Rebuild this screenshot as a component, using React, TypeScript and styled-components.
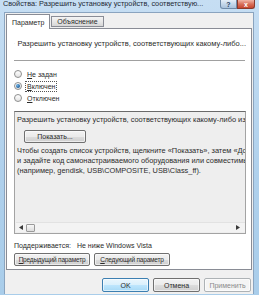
import React from "react";
import styled, { createGlobalStyle } from "styled-components";

const GlobalStyle = createGlobalStyle`
  html, body {
    margin: 0;
    padding: 0;
    background: #ffffff;
  }
  body {
    font-family: "Liberation Sans", Arial, sans-serif;
    color: #2b2b2b;
  }
`;

const Window = styled.div`
  width: 259px;
  height: 295px;
  box-sizing: border-box;
  display: flex;
  flex-direction: column;
  padding: 0 5px 1px 4px;
  background: linear-gradient(180deg, #c6def3 0%, #afd0ec 60%, #a9cdea 100%);
  overflow: hidden;
`;

const TitleBar = styled.div`
  height: 12px;
  display: flex;
  align-items: flex-start;
  margin: 0 -1px 0 -1px;
`;

const Title = styled.div`
  flex: 1;
  font-size: 7.3px;
  line-height: 8px;
  color: #1f2a36;
  white-space: nowrap;
  overflow: hidden;
`;

const CaptionButton = styled.div<{ $close?: boolean }>`
  width: ${(p) => (p.$close ? 18 : 17)}px;
  height: 9px;
  box-sizing: border-box;
  display: flex;
  align-items: center;
  justify-content: center;
  border: 1px solid ${(p) => (p.$close ? "#8a3a2c" : "#6f8aa8")};
  border-top: none;
  border-radius: ${(p) => (p.$close ? "0 0 3px 0" : "0 0 0 3px")};
  background: ${(p) =>
    p.$close
      ? "linear-gradient(180deg, #f0b4a6 0%, #d9705b 50%, #c7452e 100%)"
      : "linear-gradient(180deg, #e4eef8 0%, #c4d7ea 50%, #a9c2dc 100%)"};
  font-size: 7px;
  font-weight: bold;
  color: ${(p) => (p.$close ? "#ffffff" : "#29415e")};
`;

const Client = styled.div`
  flex: 1;
  display: flex;
  flex-direction: column;
  min-height: 0;
  border: 1px solid #8aa4bf;
  border-bottom: none;
  background: #f0f0f0;
  padding: 1px;
`;

const TabRow = styled.div`
  height: 14px;
  display: flex;
  align-items: flex-end;
  gap: 1px;
  position: relative;
  z-index: 1;
`;

const Tab = styled.div<{ $active?: boolean }>`
  box-sizing: border-box;
  height: ${(p) => (p.$active ? 15 : 11)}px;
  padding: 0 5px;
  display: flex;
  align-items: center;
  font-size: 7px;
  border: 1px solid #898c95;
  border-bottom: ${(p) => (p.$active ? "none" : "1px solid #898c95")};
  background: ${(p) =>
    p.$active ? "#ffffff" : "linear-gradient(180deg, #f4f4f4 0%, #e7e7e7 50%, #d6d6d6 100%)"};
  margin-bottom: ${(p) => (p.$active ? "-1px" : "1px")};
`;

const Panel = styled.div`
  flex: 1;
  display: flex;
  flex-direction: column;
  min-height: 0;
  border: 1px solid #898c95;
  background: #ffffff;
  padding: 8px 5px 0 7px;
`;

const HeaderRow = styled.div`
  height: 12px;
  display: flex;
  align-items: center;
  gap: 3px;
  font-size: 7.5px;
  white-space: nowrap;
  overflow: hidden;
`;

const Divider = styled.div`
  height: 1px;
  margin: 11px 1px 0 0;
  background: #a0a0a0;
`;

const RadioGroup = styled.div`
  margin-top: 7px;
  display: flex;
  flex-direction: column;
`;

const RadioRow = styled.div`
  height: 12px;
  display: flex;
  align-items: center;
  gap: 4px;
  font-size: 7px;
`;

const RadioCircle = styled.span<{ $checked?: boolean }>`
  width: 8px;
  height: 8px;
  box-sizing: border-box;
  border-radius: 50%;
  border: 1px solid #8e8f8f;
  background: linear-gradient(180deg, #ffffff 0%, #e3e3e3 100%);
  display: flex;
  align-items: center;
  justify-content: center;

  &::after {
    content: "";
    display: ${(p) => (p.$checked ? "block" : "none")};
    width: 4px;
    height: 4px;
    border-radius: 50%;
    background: radial-gradient(circle at 35% 35%, #6fb3e8 0%, #1f5f99 70%);
  }
`;

const RadioLabel = styled.span<{ $focused?: boolean }>`
  padding: 0 1px;
  outline: ${(p) => (p.$focused ? "1px dotted #555" : "none")};
  line-height: 9px;
`;

const Key = styled.span`
  text-decoration: underline;
`;

const OptionsBox = styled.div`
  margin-top: 7px;
  height: 123px;
  box-sizing: border-box;
  display: flex;
  flex-direction: column;
  border: 1px solid #a3a3a3;
  border-top-color: #6a6a6a;
  background: #eeeeee;
  padding: 3px 0 0 2px;
  overflow: hidden;
  font-size: 7.4px;
`;

const BoxLine = styled.div`
  height: 10px;
  line-height: 10px;
  white-space: nowrap;
`;

const WinButton = styled.div<{ $width: number; $variant?: "default" | "disabled" }>`
  width: ${(p) => p.$width}px;
  height: 13px;
  box-sizing: border-box;
  display: flex;
  align-items: center;
  justify-content: center;
  font-size: 7px;
  white-space: nowrap;
  border-radius: 2px;
  border: 1px solid
    ${(p) => (p.$variant === "default" ? "#3c7fb1" : p.$variant === "disabled" ? "#adb2b5" : "#707070")};
  color: ${(p) => (p.$variant === "disabled" ? "#8a8a8a" : "#2b2b2b")};
  background: ${(p) =>
    p.$variant === "default"
      ? "linear-gradient(180deg, #eaf6fd 0%, #d9f0fc 50%, #bee6fd 51%, #a7d9f5 100%)"
      : p.$variant === "disabled"
      ? "#f4f4f4"
      : "linear-gradient(180deg, #f2f2f2 0%, #ebebeb 50%, #dddddd 51%, #cfcfcf 100%)"};
  box-shadow: inset 0 0 0 1px rgba(255, 255, 255, 0.6);
`;

const NavButton = styled(WinButton)`
  font-size: 6.5px;
  letter-spacing: -0.2px;
`;

const ShowButtonRow = styled.div`
  margin: 5px 0 3px 7px;
`;

const ScrollBar = styled.div`
  margin: auto 0 1px -1px;
  height: 9px;
  display: flex;
  align-items: center;
  padding: 0 5px 0 3px;
  background: #f3f3f3;
  border-top: 1px solid #e2e2e2;
`;

const Thumb = styled.div`
  width: 9px;
  height: 8px;
  box-sizing: border-box;
  margin-left: 3px;
  border: 1px solid #9a9a9a;
  border-radius: 1px;
  background: linear-gradient(180deg, #f7f7f7 0%, #dcdcdc 100%);
`;

const Spacer = styled.div`
  flex: 1;
`;

const SupportRow = styled.div`
  margin-top: 6px;
  height: 10px;
  display: flex;
  align-items: center;
  gap: 6px;
  font-size: 7px;
  white-space: nowrap;
`;

const NavRow = styled.div`
  margin-top: 3px;
  display: flex;
  gap: 4px;
`;

const Footer = styled.div`
  height: 23px;
  box-sizing: border-box;
  padding: 8px 1px 0 0;
  display: flex;
  justify-content: flex-end;
  gap: 4px;
`;

const FooterButton = styled(WinButton)`
  height: 14px;
`;

const SettingIcon = () => (
  <svg width="10" height="9" viewBox="0 0 10 9">
    <rect x="0.5" y="0.5" width="9" height="8" fill="#dfe6ee" stroke="#6f7f92" />
    <rect x="1" y="1" width="8" height="2" fill="#3d7cc0" />
    <rect x="1.5" y="4" width="3" height="3" fill="#e8c23a" />
    <rect x="5.5" y="4" width="3" height="1" fill="#7a8796" />
    <rect x="5.5" y="6" width="3" height="1" fill="#7a8796" />
  </svg>
);

const Arrow = ({ dir }: { dir: "left" | "right" }) => (
  <svg width="4" height="5" viewBox="0 0 4 5">
    <polygon points={dir === "left" ? "4,0 4,5 0,2.5" : "0,0 0,5 4,2.5"} fill="#3a3a3a" />
  </svg>
);

const App: React.FC = () => {
  return (
    <>
      <GlobalStyle />
      <Window>
        <TitleBar>
          <Title>Свойства: Разрешить установку устройств, соответствую...</Title>
          <CaptionButton>?</CaptionButton>
          <CaptionButton $close>x</CaptionButton>
        </TitleBar>

        <Client>
          <TabRow>
            <Tab $active>Параметр</Tab>
            <Tab>Объяснение</Tab>
          </TabRow>

          <Panel>
            <HeaderRow>
              <SettingIcon />
              <span>Разрешить установку устройств, соответствующих какому-либо...</span>
            </HeaderRow>

            <Divider />

            <RadioGroup>
              <RadioRow>
                <RadioCircle />
                <RadioLabel>
                  <Key>Н</Key>е задан
                </RadioLabel>
              </RadioRow>
              <RadioRow>
                <RadioCircle $checked />
                <RadioLabel $focused>
                  <Key>В</Key>ключен
                </RadioLabel>
              </RadioRow>
              <RadioRow>
                <RadioCircle />
                <RadioLabel>
                  <Key>О</Key>тключен
                </RadioLabel>
              </RadioRow>
            </RadioGroup>

            <OptionsBox>
              <BoxLine>
                Разрешить установку устройств, соответствующих какому-либо из следующих кодов устройств:
              </BoxLine>
              <ShowButtonRow>
                <WinButton $width={62}>Показать...</WinButton>
              </ShowButtonRow>
              <BoxLine>Чтобы создать список устройств, щелкните «Показать», затем «Добавить»</BoxLine>
              <BoxLine>и задайте код самонастраиваемого оборудования или совместимый код</BoxLine>
              <BoxLine>(например, gendisk, USB\COMPOSITE, USB\Class_ff).</BoxLine>
              <ScrollBar>
                <Arrow dir="left" />
                <Thumb />
                <Spacer />
                <Arrow dir="right" />
              </ScrollBar>
            </OptionsBox>

            <SupportRow>
              <span>Поддерживается:</span>
              <span>Не ниже Windows Vista</span>
            </SupportRow>

            <NavRow>
              <NavButton $width={76}>
                <Key>П</Key>редыдущий параметр
              </NavButton>
              <NavButton $width={76}>
                <Key>С</Key>ледующий параметр
              </NavButton>
            </NavRow>
          </Panel>

          <Footer>
            <FooterButton $width={47} $variant="default">
              OK
            </FooterButton>
            <FooterButton $width={47}>Отмена</FooterButton>
            <FooterButton $width={47} $variant="disabled">
              Применить
            </FooterButton>
          </Footer>
        </Client>
      </Window>
    </>
  );
};

export default App;
